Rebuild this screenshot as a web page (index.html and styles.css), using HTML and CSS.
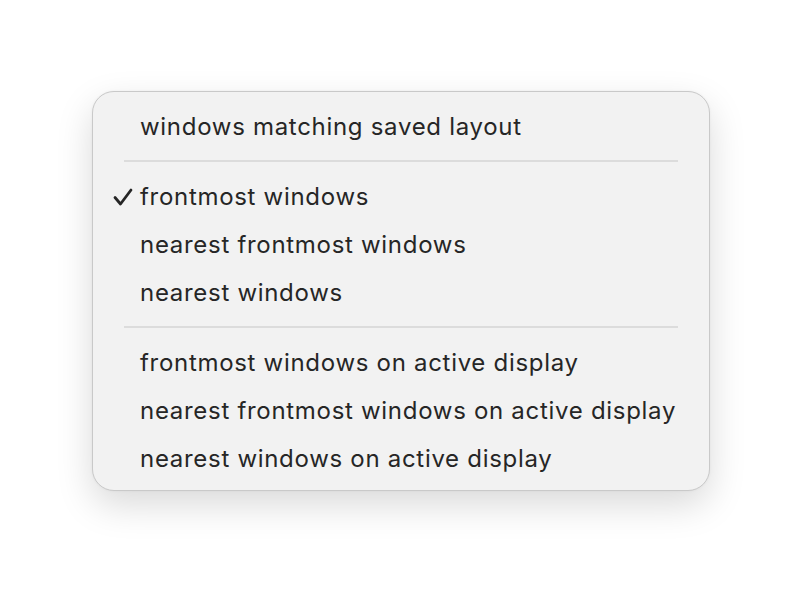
FILE: index.html
```html
<!DOCTYPE html>
<html>
<head>
<meta charset="utf-8">
<link rel="stylesheet" href="styles.css">
</head>
<body>
<div class="menu">
  <div class="item">windows matching saved layout</div>
  <div class="sep"></div>
  <div class="item checked"><svg class="check" viewBox="0 0 20 18" width="20" height="18"><path d="M2 9.5 L7.5 16 L18 2" fill="none" stroke="#262626" stroke-width="2.8" stroke-linecap="round" stroke-linejoin="round"/></svg>frontmost windows</div>
  <div class="item">nearest frontmost windows</div>
  <div class="item">nearest windows</div>
  <div class="sep"></div>
  <div class="item">frontmost windows on active display</div>
  <div class="item">nearest frontmost windows on active display</div>
  <div class="item">nearest windows on active display</div>
</div>
</body>
</html>
```
FILE: styles.css
```css
html, body {
  margin: 0;
  padding: 0;
  background: #ffffff;
}
body {
  min-height: 600px;
  padding: 91px 0 0 92px;
  box-sizing: border-box;
  font-family: Inter, "Noto Sans", sans-serif;
}
.menu {
  width: 616px;
  padding: 11px 0 7px 0;
  background: #f2f2f2;
  border: 1px solid #c9c9c9;
  border-radius: 22px;
  box-shadow: 0 14px 36px rgba(0, 0, 0, 0.15), 0 0 3px rgba(0, 0, 0, 0.05);
}
.item {
  position: relative;
  height: 48px;
  line-height: 48px;
  padding-left: 47px;
  font-size: 24px;
  color: #262626;
  letter-spacing: 0.7px;
  white-space: nowrap;
}
.check {
  position: absolute;
  left: 20px;
  top: 15px;
}
.sep {
  height: 22px;
  display: flex;
  align-items: center;
  padding: 0 31px 0 31px;
}
.sep::before {
  content: "";
  display: block;
  flex: 1;
  height: 2px;
  margin-top: -2px;
  background: #dcdcdc;
}
```
